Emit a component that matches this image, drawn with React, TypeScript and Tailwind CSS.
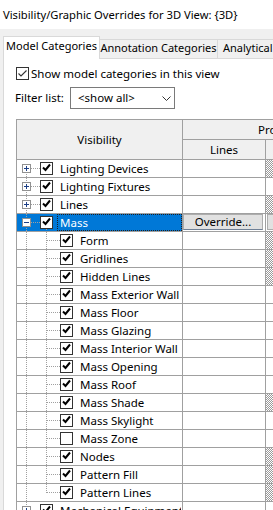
import clsx from 'clsx';

type Row = {
  label: string;
  level: 0 | 1;
  checked?: boolean;
  hatch?: boolean;
  open?: boolean;
  last?: boolean;
  selected?: boolean;
};

// Category tree rows, top to bottom.
const rows: Row[] = [
  { label: 'Lighting Devices', level: 0, checked: true, hatch: true },
  { label: 'Lighting Fixtures', level: 0, checked: true },
  { label: 'Lines', level: 0, checked: true, hatch: true },
  { label: 'Mass', level: 0, checked: true, open: true, selected: true },
  { label: 'Form', level: 1, checked: true, hatch: true },
  { label: 'Gridlines', level: 1, checked: true, hatch: true },
  { label: 'Hidden Lines', level: 1, checked: true, hatch: true },
  { label: 'Mass Exterior Wall', level: 1, checked: true },
  { label: 'Mass Floor', level: 1, checked: true },
  { label: 'Mass Glazing', level: 1, checked: true },
  { label: 'Mass Interior Wall', level: 1, checked: true },
  { label: 'Mass Opening', level: 1, checked: true },
  { label: 'Mass Roof', level: 1, checked: true },
  { label: 'Mass Shade', level: 1, checked: true, hatch: true },
  { label: 'Mass Skylight', level: 1, checked: true },
  { label: 'Mass Zone', level: 1, checked: false },
  { label: 'Nodes', level: 1, checked: true, hatch: true },
  { label: 'Pattern Fill', level: 1, checked: true, hatch: true },
  { label: 'Pattern Lines', level: 1, checked: true, hatch: true, last: true },
  { label: 'Mechanical Equipment', level: 0, checked: true },
];

const hatch =
  'bg-[repeating-conic-gradient(#9a9a9a_0%_25%,#ffffff_0%_50%)] bg-[length:2px_2px]';

function TreeCheck({ x, checked }: { x: number; checked?: boolean }) {
  return (
    <g>
      <rect x={x + 0.5} y={2.5} width={12} height={12} fill="#fff" stroke="#333" shapeRendering="crispEdges" />
      {checked && (
        <path
          d={`M${x + 3} ${7.5} L${x + 5.5} ${10} L${x + 10} ${4.5}`}
          fill="none"
          stroke="#000"
          strokeWidth={2}
        />
      )}
    </g>
  );
}

function Dotted(props: { x1: number; y1: number; x2: number; y2: number }) {
  return <line {...props} stroke="#a0a0a0" strokeDasharray="1 1" shapeRendering="crispEdges" />;
}

function TreeGlyph({ row, first }: { row: Row; first: boolean }) {
  if (row.level === 0) {
    return (
      <svg width={40} height={17} className="shrink-0">
        <Dotted x1={9.5} y1={first ? 8 : 0} x2={9.5} y2={17} />
        <Dotted x1={14} y1={8.5} x2={23} y2={8.5} />
        {row.open && <Dotted x1={29.5} y1={15} x2={29.5} y2={17} />}
        <rect x={5.5} y={4.5} width={8} height={8} fill="#fff" stroke="#919191" shapeRendering="crispEdges" />
        <line x1={7} y1={8.5} x2={12} y2={8.5} stroke="#1d3f86" shapeRendering="crispEdges" />
        {!row.open && (
          <line x1={9.5} y1={6} x2={9.5} y2={11} stroke="#1d3f86" shapeRendering="crispEdges" />
        )}
        <TreeCheck x={23} checked={row.checked} />
      </svg>
    );
  }
  return (
    <svg width={60} height={17} className="shrink-0">
      <Dotted x1={9.5} y1={0} x2={9.5} y2={17} />
      <Dotted x1={29.5} y1={0} x2={29.5} y2={row.last ? 9 : 17} />
      <Dotted x1={30} y1={8.5} x2={43} y2={8.5} />
      <TreeCheck x={43} checked={row.checked} />
    </svg>
  );
}

function DataRow({ row, first }: { row: Row; first: boolean }) {
  return (
    <div className="flex h-[18px] border-b border-[#a0a0a0]">
      <div
        className={clsx(
          'w-[166px] shrink-0 border-r border-[#a0a0a0] flex',
          row.selected && 'bg-[#0078d7] text-white'
        )}
      >
        <TreeGlyph row={row} first={first} />
        <span
          className={clsx(
            'flex-1 flex items-center pl-[2px] border whitespace-nowrap overflow-hidden',
            row.selected ? 'border-dotted border-[#202020]' : 'border-transparent'
          )}
        >
          {row.label}
        </span>
      </div>
      <div className="w-[83px] shrink-0 border-r border-[#a0a0a0] flex">
        {row.selected && (
          <button className="w-[80px] h-[16px] bg-[#e1e1e1] border border-[#adadad] border-b-[#6f7f95] flex items-center justify-center text-black">
            Override...
          </button>
        )}
      </div>
      <div className={clsx('w-[60px] shrink-0 flex', row.hatch && hatch)}>
        {row.selected && (
          <div className="ml-px w-[60px] h-[16px] bg-[#e1e1e1] border border-[#adadad]"></div>
        )}
      </div>
    </div>
  );
}

export default function App() {
  return (
    <div className="w-[273px] h-[510px] overflow-hidden bg-[#f0f0f0] font-['Noto_Sans',sans-serif] text-[11.5px] leading-[16px] text-black flex flex-col">
      <div className="h-[29px] shrink-0 bg-white flex items-center pl-[3px] whitespace-nowrap text-[11.2px]">
        Visibility/Graphic Overrides for 3D View: {'{3D}'}
      </div>

      <div className="h-[29px] shrink-0 flex items-end pl-[3px] whitespace-nowrap text-[11px]">
        <div className="relative z-10 -mb-px w-[97px] h-[23px] shrink-0 bg-white border-l border-t border-r border-[#d9d9d9] flex justify-center pt-[1px]">
          Model Categories
        </div>
        <div className="w-[118px] h-[19px] shrink-0 border-t border-r border-[#d9d9d9] flex justify-center">
          Annotation Categories
        </div>
        <div className="w-[120px] h-[19px] shrink-0 border-t border-[#d9d9d9] pl-[5px]">
          Analytical Model Categories
        </div>
      </div>

      <div className="ml-[3px] flex-1 min-h-0 overflow-hidden bg-white border-l border-t border-[#d9d9d9]">
        <div className="pt-[8px] pl-[12px]">
          <div className="flex items-center gap-[2px] h-[13px]">
            <svg width={13} height={13} className="shrink-0">
              <rect x={0.5} y={0.5} width={12} height={12} fill="#fff" stroke="#333" shapeRendering="crispEdges" />
              <path d="M2.5 6.5 L5 9 L10.5 3.5" fill="none" stroke="#333" strokeWidth={1.1} />
            </svg>
            <span className="whitespace-nowrap">Show model categories in this view</span>
          </div>
        </div>

        <div className="flex items-center pl-[11px] mt-[7px]">
          <span className="w-[55px] shrink-0">Filter list:</span>
          <div className="w-[105px] h-[22px] border border-[#7a7a7a] flex items-center justify-between pl-[7px] pr-[3px]">
            <span>&lt;show all&gt;</span>
            <svg width={9} height={5} className="shrink-0">
              <path d="M0.5 0.5 L4.5 4.5 L8.5 0.5" fill="none" stroke="#333" />
            </svg>
          </div>
        </div>

        <div className="ml-[12px] mt-[10px] w-max border-l border-t border-[#a0a0a0]">
          <div className="grid grid-cols-[166px_83px_60px] grid-rows-[20px_20px] bg-[#f0f0f0]">
            <div className="row-span-2 border-r border-b border-[#a0a0a0] flex items-center justify-center">
              Visibility
            </div>
            <div className="col-span-2 border-b border-[#a0a0a0] flex items-center pl-[75px] whitespace-nowrap overflow-hidden">
              Projection/Surface
            </div>
            <div className="border-r border-b border-[#a0a0a0] flex items-center justify-center">
              Lines
            </div>
            <div className="border-b border-[#a0a0a0]"></div>
          </div>
          {rows.map((row, i) => (
            <DataRow key={row.label} row={row} first={i === 0} />
          ))}
        </div>
      </div>
    </div>
  );
}
